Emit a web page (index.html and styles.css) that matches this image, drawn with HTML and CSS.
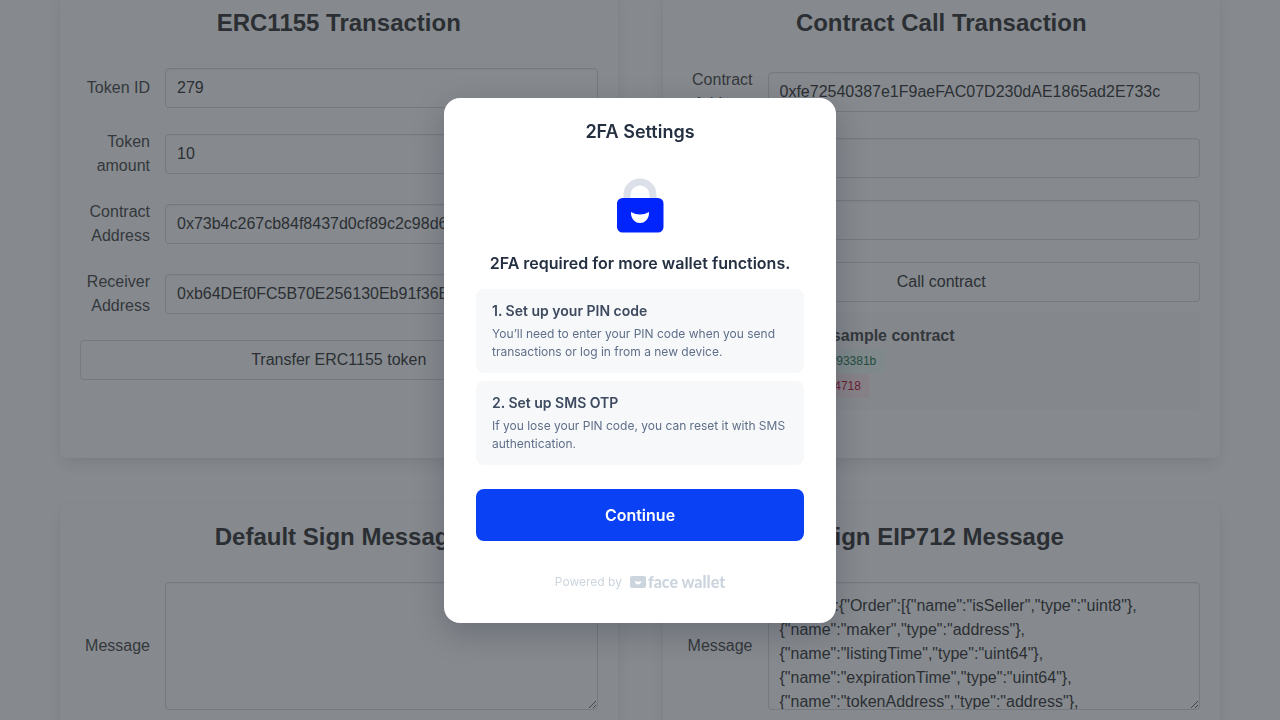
FILE: index.html
```html
<!DOCTYPE html>
<html lang="en">
<head>
  <meta charset="utf-8">
  <meta name="viewport" content="width=device-width, initial-scale=1">
  <title>2FA Settings</title>
  <link rel="stylesheet" href="styles.css">
</head>
<body class="modal-open">
  <main class="page">
    <section class="box">
      <h2 class="box-title">ERC1155 Transaction</h2>
      <form class="form">
        <div class="field">
          <label for="token-id">Token ID</label>
          <input class="input" id="token-id" type="text" value="279">
        </div>
        <div class="field">
          <label for="token-amount">Token amount</label>
          <input class="input" id="token-amount" type="text" value="10">
        </div>
        <div class="field">
          <label for="token-contract">Contract Address</label>
          <input class="input" id="token-contract" type="text" value="0x73b4c267cb84f8437d0cf89c2c98d6">
        </div>
        <div class="field">
          <label for="receiver">Receiver Address</label>
          <input class="input" id="receiver" type="text" value="0xb64DEf0FC5B70E256130Eb91f36E">
        </div>
        <button class="button" type="button">Transfer ERC1155 token</button>
      </form>
    </section>

    <section class="box">
      <h2 class="box-title">Contract Call Transaction</h2>
      <form class="form">
        <div class="field">
          <label for="call-contract">Contract Address</label>
          <input class="input" id="call-contract" type="text" value="0xfe72540387e1F9aeFAC07D230dAE1865ad2E733c">
        </div>
        <div class="field">
          <label for="call-data">Data</label>
          <input class="input" id="call-data" type="text">
        </div>
        <div class="field">
          <label for="call-value">Value</label>
          <input class="input" id="call-value" type="text">
        </div>
        <button class="button" type="button">Call contract</button>
      </form>
      <div class="sample">
        <h3 class="sample-title">Call data for the sample contract</h3>
        <span class="tag tag-success">Set the value call: 0x7f93381b</span>
        <span class="tag tag-danger">Get value call: 0x06a94718</span>
      </div>
    </section>

    <section class="box">
      <h2 class="box-title">Default Sign Message</h2>
      <div class="field">
        <label for="message">Message</label>
        <textarea class="input textarea" id="message"></textarea>
      </div>
    </section>

    <section class="box">
      <h2 class="box-title">Sign EIP712 Message</h2>
      <div class="field">
        <label for="typed-message">Message</label>
        <textarea class="input textarea" id="typed-message">{"types":{"Order":[{"name":"isSeller","type":"uint8"},
{"name":"maker","type":"address"},
{"name":"listingTime","type":"uint64"},
{"name":"expirationTime","type":"uint64"},
{"name":"tokenAddress","type":"address"},</textarea>
      </div>
    </section>
  </main>

  <div class="overlay">
    <div class="modal" role="dialog" aria-modal="true" aria-labelledby="modal-title">
      <h1 class="modal-title" id="modal-title">2FA Settings</h1>
      <svg class="lock" viewBox="0 0 48 56" width="48" height="56" aria-hidden="true">
        <path d="M11 22V17a13 13 0 0 1 26 0v5" fill="none" stroke="#dce0e9" stroke-width="7"/>
        <rect x="1" y="20" width="46.500" height="34.500" rx="5.500" fill="#0024fb"/>
        <path d="M15 34q9 5 18 0c.5 6-3.500 11-9 11s-9.500-5-9-11z" fill="#fff"/>
      </svg>
      <h2 class="modal-heading">2FA required for more wallet functions.</h2>
      <ol class="steps">
        <li class="step">
          <h3 class="step-title">1. Set up your PIN code</h3>
          <p class="step-text">You’ll need to enter your PIN code when you send transactions or log in from a new device.</p>
        </li>
        <li class="step">
          <h3 class="step-title">2. Set up SMS OTP</h3>
          <p class="step-text">If you lose your PIN code, you can reset it with SMS authentication.</p>
        </li>
      </ol>
      <button class="continue" type="button">Continue</button>
      <div class="powered">
        <span class="powered-label">Powered by</span>
        <span class="brand">
          <svg viewBox="0 0 16 12" width="16" height="12" aria-hidden="true">
            <rect width="16" height="12" rx="2" fill="#ccd5de"/>
            <path d="M4.800 5q3.200 1.300 6.400 0c0 2.200-1.400 3.500-3.200 3.500S4.800 7.200 4.800 5z" fill="#fff"/>
          </svg>
          <span class="brand-name">face wallet</span>
        </span>
      </div>
    </div>
  </div>
</body>
</html>
```

FILE: styles.css
```css
*,
*::before,
*::after {
  box-sizing: border-box;
}

body {
  margin: 0;
  background: #fff;
  color: #4a4a4a;
  font: 16px/24px "Liberation Sans", Arial, sans-serif;
}

.modal-open {
  height: 100vh;
  overflow: hidden;
}

h1, h2, h3, p, ol {
  margin: 0;
  padding: 0;
}

/* Page behind the dialog */
.page {
  display: grid;
  grid-template-columns: 1fr 1fr;
  gap: 45px;
  margin-top: -11px;
  padding: 0 60px 45px;
}

.box {
  min-width: 0;
  padding: 20px 20px 48px;
  border-radius: 6px;
  background: #fff;
  box-shadow: 0 8px 16px -2px rgba(10, 10, 10, 0.1), 0 0 0 1px rgba(10, 10, 10, 0.02);
}

.box-title {
  margin-bottom: 32px;
  color: #363636;
  font-size: 24px;
  line-height: 27px;
  text-align: center;
}

.form {
  display: grid;
  gap: 22px;
}

.field {
  display: grid;
  grid-template-columns: 70px minmax(0, 1fr);
  gap: 15px;
  align-items: center;
  text-align: right;
}

.input {
  display: block;
  width: 100%;
  height: 40px;
  padding: 0 11px;
  border: 1px solid #dbdbdb;
  border-radius: 4px;
  background: #fff;
  box-shadow: inset 0 1px 2px rgba(10, 10, 10, 0.05);
  color: #363636;
  font: inherit;
}

.textarea {
  height: 128px;
  padding: 11px;
  overflow: hidden;
  resize: vertical;
}

.button {
  height: 40px;
  padding: 0 16px;
  border: 1px solid #dbdbdb;
  border-radius: 4px;
  background: #fff;
  color: #363636;
  font: inherit;
}

.sample {
  display: flex;
  flex-direction: column;
  align-items: flex-start;
  gap: 1px;
  margin-top: 10px;
  padding: 12px 24px;
  border-radius: 4px;
  background: #fafafa;
}

.sample-title {
  font-size: 16px;
  line-height: 24px;
}

.tag {
  padding: 0 9px;
  border-radius: 4px;
  font-size: 12px;
  line-height: 24px;
}

.tag-success {
  background: #effaf5;
  color: #257953;
}

.tag-danger {
  background: #feecf0;
  color: #cc0f35;
}

/* Dialog */
.overlay {
  position: fixed;
  inset: 0;
  display: flex;
  align-items: center;
  justify-content: center;
  background: rgba(35, 42, 49, 0.55);
}

.modal {
  display: flex;
  flex-direction: column;
  width: 392px;
  max-width: 100%;
  padding: 20px 32px 29px;
  border-radius: 16px;
  background: #fff;
  box-shadow: 0 10px 32px rgba(17, 22, 48, 0.24);
  color: #243042;
  font-family: Inter, sans-serif;
}

.modal-title {
  font-size: 18px;
  font-weight: 600;
  line-height: 28px;
  text-align: center;
}

.lock {
  align-self: center;
  margin: 32px 0 17px;
}

.modal-heading {
  margin-bottom: 14px;
  font-size: 16px;
  font-weight: 600;
  line-height: 24px;
  text-align: center;
}

.steps {
  display: grid;
  gap: 8px;
  list-style: none;
}

.step {
  padding: 12px 16px;
  border-radius: 8px;
  background: #f7f8fa;
}

.step-title {
  margin-bottom: 4px;
  color: #3d4a5f;
  font-size: 14px;
  font-weight: 600;
  line-height: 20px;
}

.step-text {
  color: #5f6f89;
  font-size: 12px;
  line-height: 18px;
}

.continue {
  height: 52px;
  margin: 24px 0 29px;
  border: 0;
  border-radius: 8px;
  background: #0a41f5;
  color: #fff;
  font: 600 16px/24px Inter, sans-serif;
}

.powered {
  display: flex;
  align-items: center;
  justify-content: center;
  gap: 8px;
  color: #ccd5de;
}

.powered-label {
  font-size: 12px;
}

.brand {
  display: flex;
  align-items: center;
  gap: 2px;
}

.brand-name {
  font: 900 16px/24px Lato, sans-serif;
}
```
